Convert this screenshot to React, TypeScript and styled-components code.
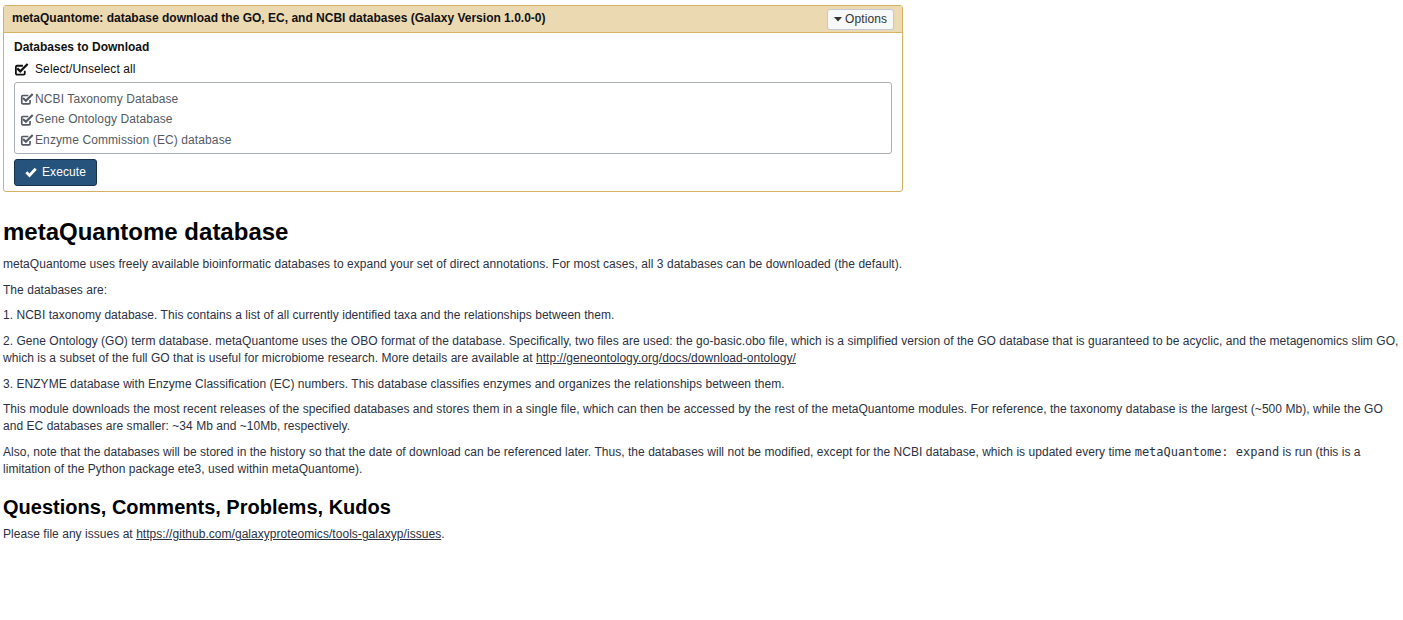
import React from "react";
import styled, { createGlobalStyle } from "styled-components";

const GlobalStyle = createGlobalStyle`
  html, body { margin: 0; padding: 0; background: #fff; }
  body {
    font-family: "Liberation Sans", Arial, Helvetica, sans-serif;
    font-size: 12px;
    line-height: 1.428571;
    color: #2c3143;
  }
  * { box-sizing: border-box; }
`;

const Page = styled.div`
  padding: 5px 0 0 3px;
`;

const Portlet = styled.div`
  width: 900px;
  border: 1px solid #d6b161;
  border-radius: 3px;
  background: #fff;
`;

const PortletHeader = styled.div`
  display: flex;
  align-items: center;
  justify-content: space-between;
  height: 27px;
  padding: 0 8px 0 8px;
  background: #ebd9b2;
  border-bottom: 1px solid #d6b161;
`;

const PortletTitle = styled.span`
  font-weight: bold;
  color: #111;
  font-size: 12px;
`;

const OptionsButton = styled.button`
  display: flex;
  align-items: center;
  gap: 3px;
  height: 21px;
  padding: 0 6px 0 6px;
  font-family: inherit;
  font-size: 12px;
  letter-spacing: 0.08px;
  color: #333;
  background: #f7f8f9;
  border: 1px solid #c4c8cf;
  border-radius: 3px;
`;

const PortletBody = styled.div`
  padding: 6px 10px 5px 10px;
`;

const FieldLabel = styled.div`
  font-weight: bold;
  color: #111;
  line-height: 17px;
`;

const SelectAllRow = styled.div`
  display: flex;
  align-items: center;
  gap: 6px;
  margin-top: 5px;
  line-height: 17px;
  color: #111;
  letter-spacing: 0.1px;
`;

const OptionList = styled.div`
  margin-top: 4px;
  border: 1px solid #aaaeb5;
  border-radius: 3px;
  padding: 6px 5px 2px 5px;
  display: flex;
  flex-direction: column;
`;

const OptionRow = styled.div`
  display: flex;
  align-items: center;
  gap: 1px;
  height: 20.5px;
  color: #555a63;
  letter-spacing: 0.1px;
`;

const ExecuteButton = styled.button`
  display: flex;
  align-items: center;
  gap: 5px;
  margin-top: 5px;
  height: 27px;
  padding: 0 10px 0 10px;
  font-family: inherit;
  font-size: 12px;
  letter-spacing: 0.1px;
  color: #fff;
  background: #25537b;
  border: 1px solid #17324b;
  border-radius: 3px;
`;

const Help = styled.div`
  margin-top: 27px;
  letter-spacing: 0.04px;
`;

const H2 = styled.h2<{ $size: number; $gap: number }>`
  margin: 0 0 ${(p) => p.$gap}px 0;
  font-size: ${(p) => p.$size}px;
  font-weight: bold;
  line-height: 1.1;
  letter-spacing: 0;
  color: #000;
`;

const P = styled.p`
  margin: 0 0 8.5px 0;
`;

const Link = styled.a`
  color: #2c3143;
  text-decoration: underline;
`;

const Code = styled.code`
  font-family: "DejaVu Sans Mono", monospace;
  font-size: 12px;
  letter-spacing: 0;
  color: #2c3143;
`;

const SecondHeadingWrap = styled.div`
  margin-top: 18px;
`;

const CheckSquare = ({ size, color }: { size: number; color: string }) => (
  <svg width={size} height={size} viewBox="0 0 16 16" aria-hidden>
    <path
      d="M11.5 9.2v3.1a1.2 1.2 0 0 1-1.2 1.2H3.2A1.2 1.2 0 0 1 2 12.3V5.2A1.2 1.2 0 0 1 3.2 4h6.3"
      fill="none"
      stroke={color}
      strokeWidth={1.9}
    />
    <path
      d="M4.3 7.6l2.4 2.4 7-7"
      fill="none"
      stroke={color}
      strokeWidth={2.4}
      strokeLinecap="square"
    />
  </svg>
);

const CheckMark = () => (
  <svg width={12} height={12} viewBox="0 0 16 16" aria-hidden>
    <path d="M1.8 8.2l4.2 4.3 8.3-8.8" fill="none" stroke="#fff" strokeWidth={3.8} />
  </svg>
);

const CaretDown = () => (
  <svg width={8} height={8} viewBox="0 0 8 8" aria-hidden>
    <path d="M0 2h8L4 6.5z" fill="#333" />
  </svg>
);

const options = [
  "NCBI Taxonomy Database",
  "Gene Ontology Database",
  "Enzyme Commission (EC) database",
];

export default function App() {
  return (
    <>
      <GlobalStyle />
      <Page>
        <Portlet>
          <PortletHeader>
            <PortletTitle>
              metaQuantome: database download the GO, EC, and NCBI databases (Galaxy Version 1.0.0-0)
            </PortletTitle>
            <OptionsButton>
              <CaretDown />
              Options
            </OptionsButton>
          </PortletHeader>
          <PortletBody>
            <FieldLabel>Databases to Download</FieldLabel>
            <SelectAllRow>
              <CheckSquare size={15} color="#111" />
              Select/Unselect all
            </SelectAllRow>
            <OptionList>
              {options.map((o) => (
                <OptionRow key={o}>
                  <CheckSquare size={14} color="#555a63" />
                  {o}
                </OptionRow>
              ))}
            </OptionList>
            <ExecuteButton>
              <CheckMark />
              Execute
            </ExecuteButton>
          </PortletBody>
        </Portlet>
        <Help>
          <H2 $size={24} $gap={11}>metaQuantome database</H2>
          <P>
            metaQuantome uses freely available bioinformatic databases to expand your set of direct annotations. For most cases, all 3 databases can be downloaded (the default).
          </P>
          <P>The databases are:</P>
          <P>
            1. NCBI taxonomy database. This contains a list of all currently identified taxa and the relationships between them.
          </P>
          <P>
            2. Gene Ontology (GO) term database. metaQuantome uses the OBO format of the database. Specifically, two files are used: the go-basic.obo file, which is a simplified version of the GO database that is guaranteed to be acyclic, and the metagenomics slim GO, which is a subset of the full GO that is useful for microbiome research. More details are available at{" "}
            <Link href="#">http://geneontology.org/docs/download-ontology/</Link>
          </P>
          <P>
            3. ENZYME database with Enzyme Classification (EC) numbers. This database classifies enzymes and organizes the relationships between them.
          </P>
          <P>
            This module downloads the most recent releases of the specified databases and stores them in a single file, which can then be accessed by the rest of the metaQuantome modules. For reference, the taxonomy database is the largest (~500 Mb), while the GO and EC databases are smaller: ~34 Mb and ~10Mb, respectively.
          </P>
          <P>
            Also, note that the databases will be stored in the history so that the date of download can be referenced later. Thus, the databases will not be modified, except for the NCBI database, which is updated every time <Code>metaQuantome: expand</Code> is run (this is a limitation of the Python package ete3, used within metaQuantome).
          </P>
          <SecondHeadingWrap>
            <H2 $size={20} $gap={8}>Questions, Comments, Problems, Kudos</H2>
          </SecondHeadingWrap>
          <P>
            Please file any issues at{" "}
            <Link href="#">https://github.com/galaxyproteomics/tools-galaxyp/issues</Link>.
          </P>
        </Help>
      </Page>
    </>
  );
}
